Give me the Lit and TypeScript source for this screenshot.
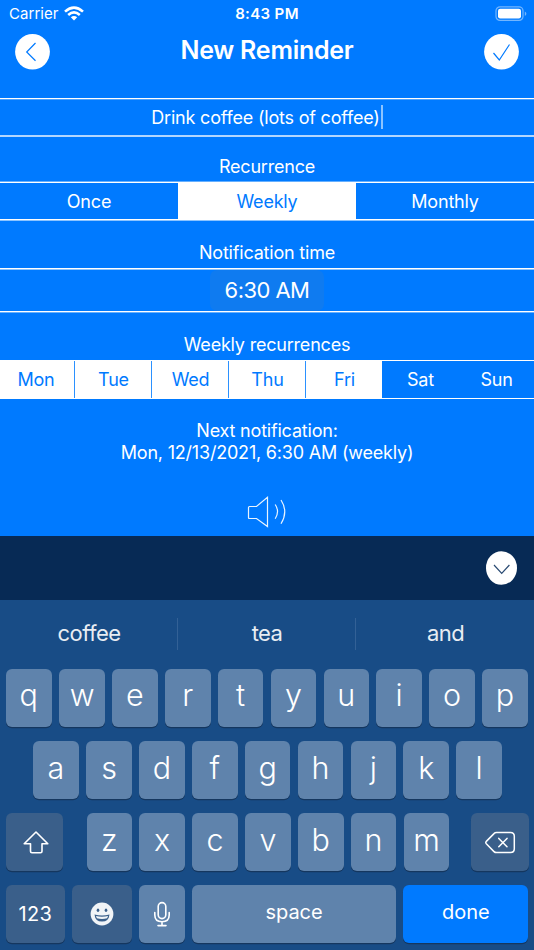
import { LitElement, html, css } from "lit";
import { customElement } from "lit/decorators.js";
import { classMap } from "lit/directives/class-map.js";

@customElement("reminder-form")
class ReminderForm extends LitElement {
  static styles = css`
    :host { display: flex; flex-direction: column; height: 535.5px; color: #fff; background: #007aff; font-size: 18px; letter-spacing: -0.2px; text-align: center; }
    svg { display: block; flex: none; fill: none; }
    .status { display: grid; grid-template-columns: 1fr auto 1fr; align-items: center; height: 27px; padding: 0 7px 0 9px; font-size: 15px; letter-spacing: 0.05px; }
    .carrier { display: flex; align-items: center; gap: 5.5px; }
    .clock { font-weight: 600; letter-spacing: 0.35px; margin-left: -2px; }
    .battery { justify-self: end; }
    .header { display: flex; justify-content: space-between; height: 71px; padding: 7px 15px 0; box-sizing: border-box; }
    h1 { margin: 0; font-size: 25px; line-height: 32px; font-weight: 600; letter-spacing: -0.25px; }
    .field { display: flex; align-items: center; justify-content: center; height: 36px; border-top: 1px solid #fff; border-bottom: 2px solid #b3d7ff; box-shadow: inset 0 1px 0 #4da2ff; }
    .caret { width: 2px; height: 24px; margin-left: 1px; background: #8cc4ff; }
    .label { display: flex; align-items: flex-end; justify-content: center; box-sizing: border-box; line-height: 22px; padding-bottom: 4px; }
    .l1 { height: 45px; }
    .l2 { height: 48px; }
    .l3 { height: 48px; }
    .segments { display: grid; box-sizing: border-box; border-top: 1px solid #fff; border-bottom: 1px solid #fff; }
    .three { grid-template-columns: 178px 178px 178px; height: 38px; box-shadow: 0 1px 0 #8cc4ff, 0 -1px 0 #66b0ff; }
    .seven { grid-template-columns: 75px 77px 77px 77px 76px 76px 76px; height: 39px; }
    .seg { display: flex; align-items: center; justify-content: center; padding-top: 1px; }
    .seven .seg { padding: 0 0 0 1px; }
    .seven .seg:first-child { padding: 0 2px 0 0; }
    .on { background: #fff; color: #007aff; }
    .split { border-right: 1px solid #2b91ff; }
    .time { display: flex; justify-content: center; height: 42px; border-top: 1px solid #fff; border-bottom: 1px solid #fff; box-shadow: 0 1px 0 #66b0ff, inset 0 1px 0 #8cc4ff; }
    .pill { width: 114px; margin-top: 1px; border-radius: 7px; background: #0f7bf0; font-size: 22px; line-height: 41px; letter-spacing: -0.55px; }
    .next { margin-top: 21px; line-height: 22px; }
    .speaker { margin: 31px auto 0; stroke: #e9f4ff; stroke-width: 1.2; }
  `;
  render() {
    const days = ["Mon", "Tue", "Wed", "Thu", "Fri", "Sat", "Sun"];
    return html`
      <div class="status">
        <div class="carrier"><span>Carrier</span>
          <svg width="20" height="16" viewBox="0 0 20 16" stroke="#fff" stroke-width="2.6"><path d="M1 5.6Q10-2.4 19 5.6M4.2 9Q10 3.8 15.8 9"/><path d="M10 14.6L6.8 11.3Q10 8.6 13.2 11.3Z" fill="#fff" stroke="none"/></svg>
        </div>
        <span class="clock">8:43 PM</span>
        <svg class="battery" width="32" height="16" viewBox="0 0 32 16"><rect x="1" y=".8" width="27" height="13.6" rx="4" stroke="#73b6ff" stroke-width="1.2"/><rect x="3" y="2.8" width="23" height="9.6" rx="2.2" fill="#fff"/><path d="M29.8 5.4v4.5q1.6-.7 1.6-2.25T29.8 5.4" fill="#73b6ff"/></svg>
      </div>
      <div class="header">
        <svg width="35" height="36" viewBox="0 0 35 36"><ellipse cx="17.5" cy="17.8" rx="17.4" ry="17.8" fill="#fff"/><path d="M20.5 9L11.7 18L20.5 26.7" stroke="#007aff" stroke-width="1.2"/></svg>
        <h1>New Reminder</h1>
        <svg width="35" height="36" viewBox="0 0 35 36"><ellipse cx="17.5" cy="17.8" rx="17.4" ry="17.8" fill="#fff"/><path d="M9.5 19L15.3 26L25.5 10.5" stroke="#007aff" stroke-width="1.2"/></svg>
      </div>
      <div class="field"><span>Drink coffee (lots of coffee)</span><i class="caret"></i></div>
      <div class="label l1">Recurrence</div>
      <div class="segments three">
        ${["Once", "Weekly", "Monthly"].map((t) => html`<div class=${classMap({ seg: true, on: t === "Weekly" })}><span>${t}</span></div>`)}
      </div>
      <div class="label l2">Notification time</div>
      <div class="time"><div class="pill">6:30 AM</div></div>
      <div class="label l3">Weekly recurrences</div>
      <div class="segments seven">
        ${days.map((t, i) => html`<div class=${classMap({ seg: true, on: i < 5, split: i < 4 })}><span>${t}</span></div>`)}
      </div>
      <div class="next">Next notification:<br />Mon, 12/13/2021, 6:30 AM (weekly)</div>
      <svg class="speaker" width="40" height="34" viewBox="0 0 40 34"><path d="M2.5 11.5H9.5L20.5 2.2V31.5L9.5 23.5H2.5Q1.5 23.5 1.5 22.5V12.5Q1.5 11.5 2.5 11.5ZM28.2 9.5Q32.9 16.5 28.2 23.8M34 5Q41.5 16.5 34 28.7"/></svg>
    `;
  }
}

@customElement("soft-keyboard")
class SoftKeyboard extends LitElement {
  static styles = css`
    :host { display: block; height: 414.5px; background: #184c86; color: #fff; }
    svg { display: block; fill: none; }
    .bar { display: flex; align-items: center; justify-content: flex-end; height: 64.5px; padding-right: 17px; background: #072a55; }
    .suggestions { display: grid; grid-template-columns: 178px 178px 178px; height: 68.5px; align-items: center; font-size: 22px; letter-spacing: -0.55px; text-align: center; color: #e8edf3; }
    .word { height: 32px; line-height: 31px; border-right: 1px solid #336196; padding-left: 1px; box-sizing: border-box; }
    .word:last-child { border: 0; }
    .row { display: grid; column-gap: 7.35px; height: 58.2px; margin-bottom: 14px; }
    .r1 { grid-template-columns: 46.4px repeat(9, 45.5px); padding-left: 5.6px; }
    .r2 { grid-template-columns: 46.4px repeat(8, 45.5px); padding-left: 32.7px; }
    .r3 { grid-template-columns: 73.7px repeat(7, 45.5px) 72.5px; padding-left: 5.6px; }
    .r3 .key:first-child { margin-right: 15.8px; }
    .r3 .key:last-child { margin-left: 14.6px; }
    .r4 { grid-template-columns: 59.5px 59.5px 45.5px 203.6px 125px; column-gap: 7.4px; padding-left: 5.6px; margin-bottom: 0; }
    .key { display: flex; align-items: center; justify-content: center; border-radius: 6px; background: #5f83ac; box-shadow: 0 1.2px 0 #15375f; font-size: 30.5px; font-weight: 300; padding-bottom: 5.5px; box-sizing: border-box; }
    .dark { background: #3a5f8a; }
    .small { font-size: 20px; font-weight: 400; padding-bottom: 4px; }
    .num { padding-bottom: 0; letter-spacing: 0.3px; }
    .blue { background: #007aff; }
    .icon { padding: 0; }
  `;
  key(t: string) {
    return html`<div class="key">${t}</div>`;
  }
  render() {
    return html`
      <div class="bar"><svg width="31" height="34" viewBox="0 0 31 34"><ellipse cx="15.5" cy="17" rx="15.5" ry="16.8" fill="#fff"/><path d="M8 14L15.7 22.3L23.4 14" stroke="#294a72" stroke-width="1.2"/></svg></div>
      <div class="suggestions"><div class="word">coffee</div><div class="word">tea</div><div class="word">and</div></div>
      <div class="row r1">${[..."qwertyuiop"].map((t) => this.key(t))}</div>
      <div class="row r2">${[..."asdfghjkl"].map((t) => this.key(t))}</div>
      <div class="row r3">
        <div class="key dark icon"><svg width="28" height="26" viewBox="0 0 28 26" stroke="#fff" stroke-width="1.6" stroke-linejoin="round"><path d="M15 3L26.8 14.8H21V22.3Q21 23.8 19.5 23.8H11Q9.5 23.8 9.5 22.3V14.8H3.2Z"/></svg></div>
        ${[..."zxcvbnm"].map((t) => this.key(t))}
        <div class="key dark icon"><svg width="32" height="24" viewBox="0 0 32 24" stroke="#fff" stroke-width="1.5" stroke-linejoin="round" stroke-linecap="round"><path d="M12.5 2.5H26.5Q30.3 2.5 30.3 6.3V18.8Q30.3 22.6 26.5 22.6H12.5Q11 22.6 10 21.6L2.3 13.8Q1.2 12.6 2.3 11.4L10 3.6Q11 2.5 12.5 2.5ZM14.8 8.4L23 16.8M23 8.4L14.8 16.8"/></svg></div>
      </div>
      <div class="row r4">
        <div class="key dark small num">123</div>
        <div class="key dark icon"><svg width="24" height="24" viewBox="0 0 24 24"><circle cx="12" cy="12" r="11.4" fill="#f1f4f7"/><ellipse cx="8" cy="8.2" rx="1.3" ry="1.8" fill="#3a5f8a"/><ellipse cx="16" cy="8.2" rx="1.3" ry="1.8" fill="#3a5f8a"/><path d="M4.5 12.4Q12 14.5 19.5 12.4Q18.8 19.6 12 19.6T4.5 12.4Z" fill="#3a5f8a"/><path d="M5.9 14Q12 15.4 18.1 14L17.1 16.2Q12 17.8 6.9 16.2Z" fill="#f1f4f7"/></svg></div>
        <div class="key icon"><svg width="18" height="26" viewBox="0 0 18 26" stroke="#fff" stroke-width="1.6" stroke-linecap="round"><rect x="5.2" y="1.6" width="7.6" height="16" rx="3.8"/><path d="M1.8 11.5V14Q1.8 20.7 9 20.7T16.2 14V11.5M9 20.7V24.5M5 24.6H13"/></svg></div>
        <div class="key small">space</div>
        <div class="key small blue">done</div>
      </div>
    `;
  }
}

@customElement("app-root")
class AppRoot extends LitElement {
  static styles = css`
    :host { display: block; width: 534px; height: 950px; overflow: hidden; font-family: Inter, "Liberation Sans", sans-serif; }
  `;
  render() {
    return html`<reminder-form></reminder-form><soft-keyboard></soft-keyboard>`;
  }
}
